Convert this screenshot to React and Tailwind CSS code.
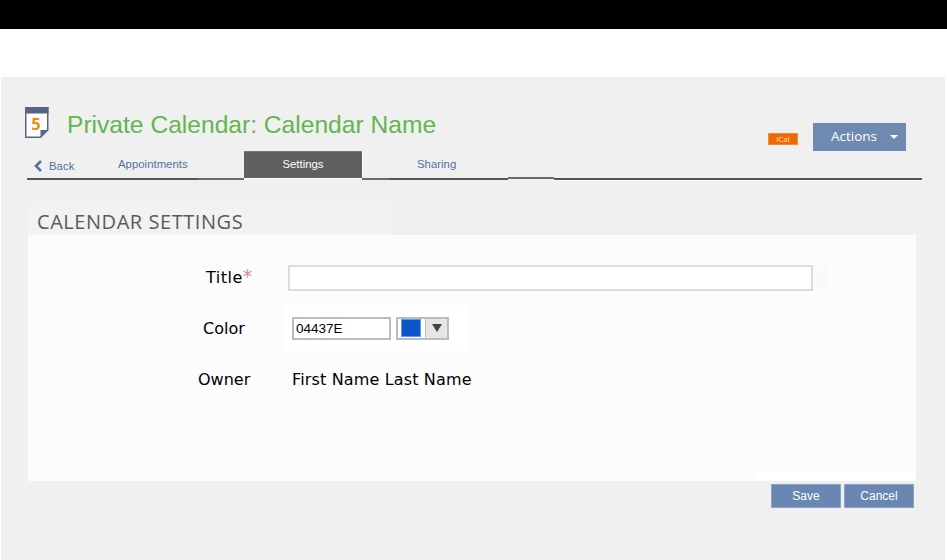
import React from "react";

const arial = "font-['Liberation_Sans',Arial,sans-serif]";
const dejavu = "font-['DejaVu_Sans',Verdana,sans-serif]";

function CalendarIcon() {
  return (
    <svg width="24" height="31" viewBox="0 0 24 31" className="shrink-0">
      <path d="M0.75 0.75H22.75V23L15.5 30.25H0.75Z" fill="#ffffff" stroke="#56648c" strokeWidth="1.5" />
      <rect x="0" y="0" width="23.5" height="6.5" fill="#56648c" />
      <path d="M15.5 30.5V23H23.5Z" fill="#56648c" />
      <text x="11" y="23" textAnchor="middle" fontSize="16.5" fontWeight="700" fill="#ee8a0e" fontFamily="'Open Sans',sans-serif">5</text>
    </svg>
  );
}

export default function App() {
  return (
    <div className={`w-[947px] h-[560px] bg-white overflow-hidden flex flex-col ${arial}`}>
      <div className="h-[29px] bg-black shrink-0" />
      <div className="h-[48px] bg-white shrink-0" />
      <div className="ml-px w-[944px] h-[483px] bg-[#f0f0f0] flex flex-col">
        <div className="h-[74px] flex justify-between pl-[24px] pr-[39px]">
          <div className="flex items-start pt-[30px]">
            <CalendarIcon />
            <h1 className="ml-[18px] mt-[2px] text-[24.6px] leading-[32px] text-[#62b650] font-normal">
              Private Calendar: Calendar Name
            </h1>
          </div>
          <div className="flex items-end">
            <div className="mb-[6px] w-[30px] h-[12px] bg-[#ee6a00] border border-[#f58a30] text-[#ffe2c8] text-[8px] leading-[10px] text-center font-['Open_Sans',sans-serif]">iCal</div>
            <button className="ml-[15px] w-[93px] h-[28px] pb-[2px] bg-[#6f8ab0] text-white text-[13.5px] flex items-center pl-[18px] font-['Open_Sans',sans-serif]">
              Actions
              <span className="ml-[13px] mt-[2px] w-0 h-0 border-x-[4px] border-x-transparent border-t-[4px] border-t-white" />
            </button>
          </div>
        </div>

        <div className="ml-[26px] w-[895px] h-[26px] flex items-stretch text-[11.4px] text-[#56709c]">
          <div className="w-[91px] flex items-center pl-[7px] pt-[4px]">
            <svg width="9" height="12" viewBox="0 0 9 12" className="shrink-0">
              <path d="M7 1L2 6L7 11" fill="none" stroke="#56709c" strokeWidth="2.6" />
            </svg>
            <span className="ml-[6px] pt-[1px]">Back</span>
          </div>
          <div className="w-[126px] flex items-center pt-[2px]">
            <span>Appointments</span>
          </div>
          <div className="w-[118px] pt-px bg-[#5f5f5f] text-white border-t border-[#777777] shadow-[1px_0_0_#ffffff] flex items-center justify-center">
            Settings
          </div>
          <div className="ml-[55px] flex items-center pt-[2px]">Sharing</div>
        </div>
        <div className="ml-[26px] h-[3px] flex items-start">
          <div className="w-[171px] h-[2px] mt-px bg-[#555555]" />
          <div className="w-[46px] h-[2px] mt-px bg-[#6a6a6a]" />
          <div className="w-[118px] h-px bg-[#5f5f5f] shadow-[0_1px_0_#ffffff]" />
          <div className="w-[27px] h-[2px] mt-px bg-[#6a6a6a]" />
          <div className="w-[119px] h-[2px] mt-px bg-[#555555]" />
          <div className="w-[46px] h-[2px] bg-[#6a6a6a]" />
          <div className="w-[368px] h-[2px] mt-px bg-[#555555] shadow-[0_1px_0_#ffffff]" />
        </div>

        <div className="mt-[25px] ml-[27px] w-[365px] h-[30px] bg-[#f2f2f2] pl-[9px] text-[20px] tracking-[0.55px] leading-[34px] text-[#5b5b5b] font-['Open_Sans',sans-serif]">
          CALENDAR SETTINGS
        </div>

        <div className={`ml-[27px] w-[888px] h-[246px] bg-[#fcfcfc] flex flex-col text-[16px] text-black ${dejavu}`}>
          <div className="mt-[30px] flex items-center h-[26px] pl-[178px]">
            <span className="w-[82px] tracking-[0.5px] whitespace-nowrap">
              Title<span className="text-[19px] leading-none text-[#d48aa8]">*</span>
            </span>
            <div className="w-[540px] h-[26px] bg-[#fafafa] flex items-center">
              <input className="w-[525px] h-[26px] bg-white border-2 border-[#dcdcdc] outline-none" />
            </div>
          </div>

          <div className="mt-[14px] flex items-center h-[46px] pl-[175px]">
            <span className="w-[80px] pt-[2px]">Color</span>
            <div className="w-[185px] h-[46px] bg-white flex items-center pl-[9px]">
              <div className={`w-[99px] h-[23px] border-2 border-[#bcbcbc] pl-[2px] text-[13.5px] leading-[19px] ${arial}`}>04437E</div>
              <div className="ml-[5px] w-[53px] h-[23px] border-2 border-[#bcbcbc] flex">
                <div className="w-[27px] bg-white flex items-center justify-center pr-px">
                  <div className="w-[20px] h-[18px] bg-[#0b55cc] border border-[#5f97ee]" />
                </div>
                <div className="flex-1 bg-[#e6e6e6] border-l border-[#bcbcbc] flex items-center justify-center">
                  <span className="w-0 h-0 border-x-[5px] border-x-transparent border-t-[8px] border-t-[#444444]" />
                </div>
              </div>
            </div>
          </div>

          <div className="mt-[17px] flex items-center h-[24px] pl-[170px]">
            <span className="w-[94px]">Owner</span>
            <span className="tracking-[0.15px]">First Name Last Name</span>
          </div>

          <div className="mt-auto mb-px mr-[2px] self-end w-[159px] h-[8px] bg-white" />
        </div>

        <div className="mt-[3px] ml-[770px] flex gap-[3px] text-[12px] text-white">
          <button className="w-[70px] h-[24px] bg-[#6a87b3] border border-[#8aa2c6]">Save</button>
          <button className="w-[70px] h-[24px] bg-[#6a87b3] border border-[#8aa2c6]">Cancel</button>
        </div>
      </div>
    </div>
  );
}
